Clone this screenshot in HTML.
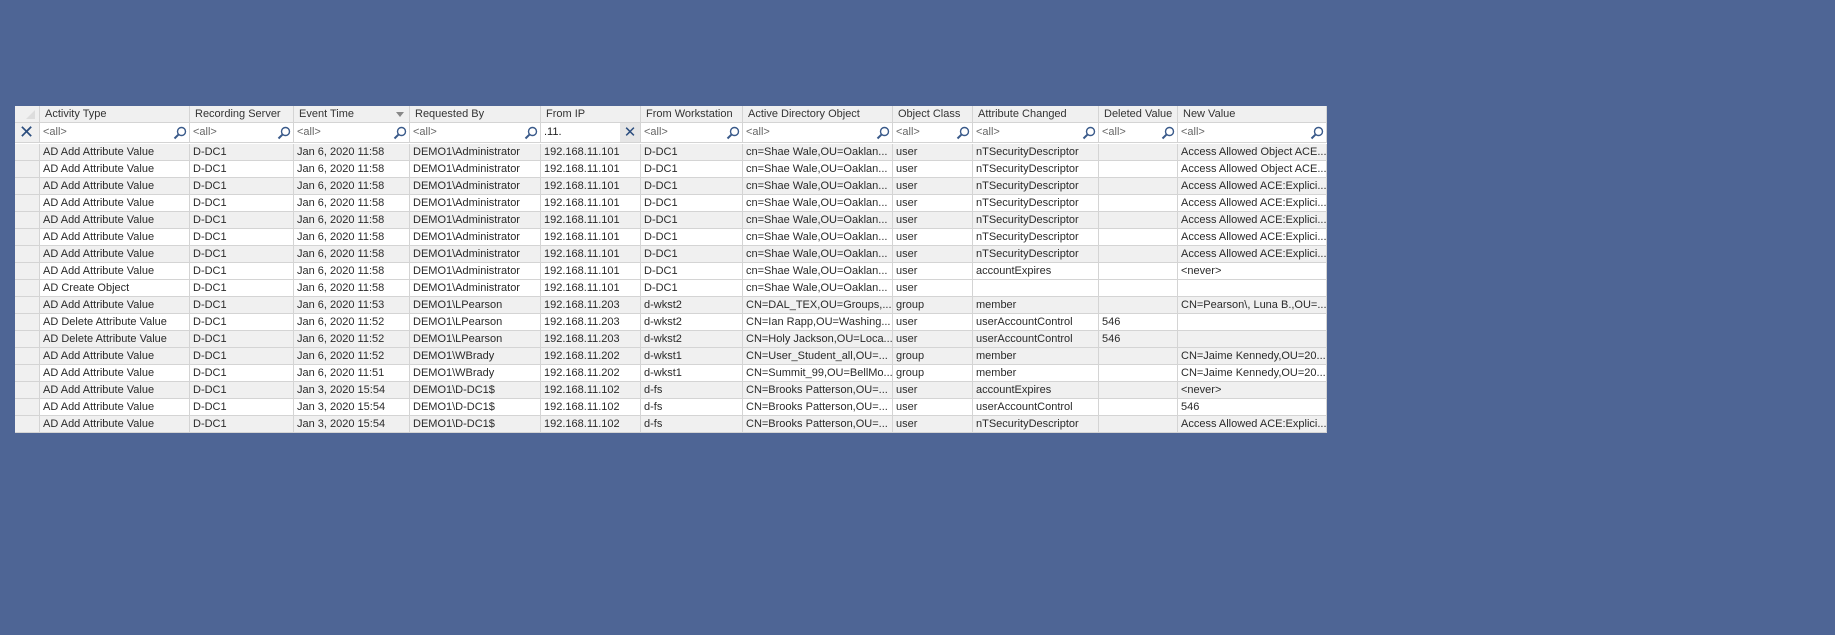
<!DOCTYPE html>
<html><head><meta charset="utf-8"><style>
body{margin:0;width:1835px;height:635px;background:#4e6595;font-family:"Liberation Sans",sans-serif;font-size:11px;color:#2a2a2a;position:relative;overflow:hidden}
#t{position:absolute;left:15px;top:106px;width:1312px;height:327px;background:#fff;overflow:hidden}
.r{position:absolute;left:0;width:1312px;display:flex}
.c{box-sizing:border-box;border-right:1px solid #d4d4d4;border-bottom:1px solid #d4d4d4;white-space:nowrap;overflow:hidden;padding-left:3px;line-height:17px;position:relative}
.h .c{background:#f0f0f0;color:#333;padding-left:5px}
.f .c{background:#fff;color:#666;font-size:11px;line-height:19px}
.g .c{background:#f0f0f0}
.rh{background:#f0f0f0 !important}
svg.m{position:absolute;right:2px;top:3px}
</style></head><body>
<div id="t"></div>
<script>
var W=[25,150,104,116,131,100,102,150,80,126,79,149];
var H=["","Activity Type","Recording Server","Event Time","Requested By","From IP","From Workstation","Active Directory Object","Object Class","Attribute Changed","Deleted Value","New Value"];
var D=[
["AD Add Attribute Value","D-DC1","Jan 6, 2020 11:58","DEMO1\\Administrator","192.168.11.101","D-DC1","cn=Shae Wale,OU=Oaklan...","user","nTSecurityDescriptor","","Access Allowed Object ACE..."],
["AD Add Attribute Value","D-DC1","Jan 6, 2020 11:58","DEMO1\\Administrator","192.168.11.101","D-DC1","cn=Shae Wale,OU=Oaklan...","user","nTSecurityDescriptor","","Access Allowed Object ACE..."],
["AD Add Attribute Value","D-DC1","Jan 6, 2020 11:58","DEMO1\\Administrator","192.168.11.101","D-DC1","cn=Shae Wale,OU=Oaklan...","user","nTSecurityDescriptor","","Access Allowed ACE:Explici..."],
["AD Add Attribute Value","D-DC1","Jan 6, 2020 11:58","DEMO1\\Administrator","192.168.11.101","D-DC1","cn=Shae Wale,OU=Oaklan...","user","nTSecurityDescriptor","","Access Allowed ACE:Explici..."],
["AD Add Attribute Value","D-DC1","Jan 6, 2020 11:58","DEMO1\\Administrator","192.168.11.101","D-DC1","cn=Shae Wale,OU=Oaklan...","user","nTSecurityDescriptor","","Access Allowed ACE:Explici..."],
["AD Add Attribute Value","D-DC1","Jan 6, 2020 11:58","DEMO1\\Administrator","192.168.11.101","D-DC1","cn=Shae Wale,OU=Oaklan...","user","nTSecurityDescriptor","","Access Allowed ACE:Explici..."],
["AD Add Attribute Value","D-DC1","Jan 6, 2020 11:58","DEMO1\\Administrator","192.168.11.101","D-DC1","cn=Shae Wale,OU=Oaklan...","user","nTSecurityDescriptor","","Access Allowed ACE:Explici..."],
["AD Add Attribute Value","D-DC1","Jan 6, 2020 11:58","DEMO1\\Administrator","192.168.11.101","D-DC1","cn=Shae Wale,OU=Oaklan...","user","accountExpires","","<never>"],
["AD Create Object","D-DC1","Jan 6, 2020 11:58","DEMO1\\Administrator","192.168.11.101","D-DC1","cn=Shae Wale,OU=Oaklan...","user","","",""],
["AD Add Attribute Value","D-DC1","Jan 6, 2020 11:53","DEMO1\\LPearson","192.168.11.203","d-wkst2","CN=DAL_TEX,OU=Groups,...","group","member","","CN=Pearson\\, Luna B.,OU=..."],
["AD Delete Attribute Value","D-DC1","Jan 6, 2020 11:52","DEMO1\\LPearson","192.168.11.203","d-wkst2","CN=Ian Rapp,OU=Washing...","user","userAccountControl","546",""],
["AD Delete Attribute Value","D-DC1","Jan 6, 2020 11:52","DEMO1\\LPearson","192.168.11.203","d-wkst2","CN=Holy Jackson,OU=Loca...","user","userAccountControl","546",""],
["AD Add Attribute Value","D-DC1","Jan 6, 2020 11:52","DEMO1\\WBrady","192.168.11.202","d-wkst1","CN=User_Student_all,OU=...","group","member","","CN=Jaime Kennedy,OU=20..."],
["AD Add Attribute Value","D-DC1","Jan 6, 2020 11:51","DEMO1\\WBrady","192.168.11.202","d-wkst1","CN=Summit_99,OU=BellMo...","group","member","","CN=Jaime Kennedy,OU=20..."],
["AD Add Attribute Value","D-DC1","Jan 3, 2020 15:54","DEMO1\\D-DC1$","192.168.11.102","d-fs","CN=Brooks Patterson,OU=...","user","accountExpires","","<never>"],
["AD Add Attribute Value","D-DC1","Jan 3, 2020 15:54","DEMO1\\D-DC1$","192.168.11.102","d-fs","CN=Brooks Patterson,OU=...","user","userAccountControl","","546"],
["AD Add Attribute Value","D-DC1","Jan 3, 2020 15:54","DEMO1\\D-DC1$","192.168.11.102","d-fs","CN=Brooks Patterson,OU=...","user","nTSecurityDescriptor","","Access Allowed ACE:Explici..."]];
var gray=[0,2,4,6,9,11,12,14,16];
function esc(s){return s.replace(/&/g,"&amp;").replace(/</g,"&lt;").replace(/>/g,"&gt;")}
var mag='<svg class="m" width="14" height="14" viewBox="0 0 14 14"><circle cx="8.5" cy="5.5" r="4" fill="none" stroke="#3a5a8a" stroke-width="1.4"/><line x1="5.6" y1="8.4" x2="1.5" y2="12.5" stroke="#3a5a8a" stroke-width="2"/></svg>';
var t=document.getElementById('t'),h='';
h+='<div class="r h" style="top:0;height:17px">';
for(var i=0;i<12;i++){h+='<div class="c" style="width:'+W[i]+'px;height:17px">'+H[i]+(i==3?'<span style="position:absolute;right:5px;top:6px;border-left:4px solid transparent;border-right:4px solid transparent;border-top:5px solid #888"></span>':'')+(i==0?'<span style="position:absolute;right:4px;bottom:3px;border-left:9px solid transparent;border-bottom:9px solid #ddd"></span>':'')+'</div>';}
h+='</div><div class="r f" style="top:17px;height:20px">';
for(var i=0;i<12;i++){
 if(i==0)h+='<div class="c rh" style="width:25px;height:20px;font-size:18px;color:#2b4d7e;padding-left:4px;line-height:19px">✕</div>';
 else if(i==5)h+='<div class="c" style="width:100px;height:20px;color:#222">.11.<span style="position:absolute;right:0;top:0;width:20px;height:19px;background:#e6e6e6;color:#2b4d7e;font-size:15px;text-align:center;line-height:19px">✕</span></div>';
 else h+='<div class="c" style="width:'+W[i]+'px;height:20px">&lt;all&gt;'+mag+'</div>';}
h+='</div>';
for(var r=0;r<D.length;r++){
 var g=gray.indexOf(r)>=0;
 h+='<div class="r'+(g?' g':'')+'" style="top:'+(38+r*17)+'px;height:17px"><div class="c rh" style="width:25px;height:17px"></div>';
 for(var i=0;i<11;i++)h+='<div class="c" style="width:'+W[i+1]+'px;height:17px">'+esc(D[r][i])+'</div>';
 h+='</div>';}
t.innerHTML=h;
</script>
</body></html>
